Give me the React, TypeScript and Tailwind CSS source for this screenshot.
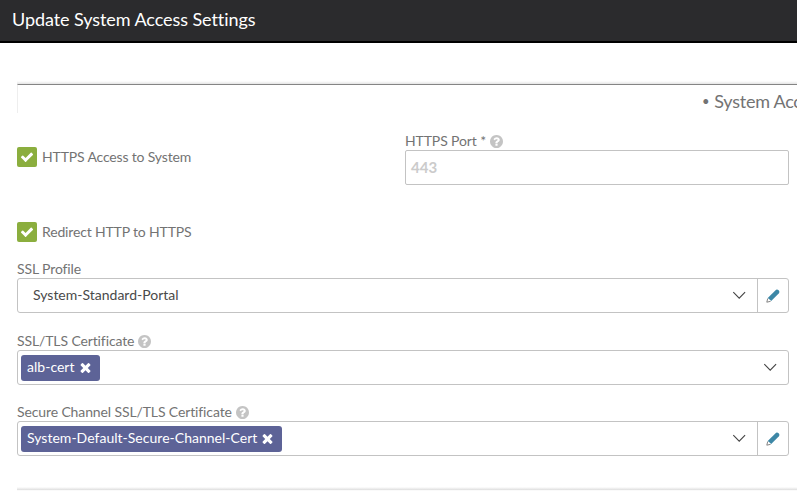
import type { ReactNode } from "react";

type IconProps = { className?: string };

function CheckIcon({ className }: IconProps) {
  return (
    <svg viewBox="0 0 1792 1792" className={className} fill="currentColor">
      <path d="M1671 566q0 40-28 68l-724 724-136 136q-28 28-68 28t-68-28l-136-136-362-362q-28-28-28-68t28-68l136-136q28-28 68-28t68 28l294 295 656-657q28-28 68-28t68 28l136 136q28 28 28 68z" />
    </svg>
  );
}

function TimesIcon({ className }: IconProps) {
  return (
    <svg viewBox="0 0 1792 1792" className={className} fill="currentColor">
      <path d="M1490 1322q0 40-28 68l-136 136q-28 28-68 28t-68-28l-294-294-294 294q-28 28-68 28t-68-28l-136-136q-28-28-28-68t28-68l294-294-294-294q-28-28-28-68t28-68l136-136q28-28 68-28t68 28l294 294 294-294q28-28 68-28t68 28l136 136q28 28 28 68t-28 68l-294 294 294 294q28 28 28 68z" />
    </svg>
  );
}

function HelpIcon() {
  return (
    <svg viewBox="128 128 1536 1536" className="size-[13px] text-[#c4c4c4]" fill="currentColor">
      <path d="M1024 1376v-192q0-14-9-23t-23-9h-192q-14 0-23 9t-9 23v192q0 14 9 23t23 9h192q14 0 23-9t9-23zm256-672q0-88-55.5-163t-138.5-116-170-41q-243 0-371 213-15 24 8 42l132 100q7 6 19 6 16 0 25-12 53-68 86-92 34-24 86-24 48 0 85.5 26t37.5 59q0 38-20 61t-68 45q-63 28-115.5 86.500t-52.5 125.500v36q0 14 9 23t23 9h192q14 0 23-9t9-23q0-19 21.500-49.500t54.500-49.500q32-18 49-28.500t46-35 44.500-48 28-60.500 12.500-81zm384 192q0 209-103 385.500t-279.500 279.500-385.500 103-385.500-103-279.500-279.500-103-385.500 103-385.500 279.500-279.500 385.500-103 385.500 103 279.500 279.500 103 385.500z" />
    </svg>
  );
}

function ChevronIcon() {
  return (
    <svg viewBox="0 0 14 8" className="mb-0.5 h-2 w-3.5 text-[#444]" fill="none" stroke="currentColor" strokeWidth="1.1">
      <path d="M1.300 1.200l5.900 5.900 5.900-5.900" />
    </svg>
  );
}

function PencilIcon() {
  return (
    <svg viewBox="0 0 14 14" className="size-3.5">
      <path d="M1.500 9.300L9.300 1.400Q10.900-.100 12.600 1.300Q14.100 3 12.700 4.500L5.200 12Z" fill="#3d87a6" />
      <path d="M2 9.200L.900 13.100L5 12Z" fill="#fff" />
      <path d="M1.700 9.600L.800 13.200L4.600 12.300" fill="none" stroke="#777" strokeWidth=".9" />
    </svg>
  );
}

function Checkbox({ children }: { children: ReactNode }) {
  return (
    <label className="flex h-5 items-center gap-[5px]">
      <span className="flex size-5 items-center justify-center rounded-[2px] bg-[#8bae3e] text-white">
        <CheckIcon className="size-[14px]" />
      </span>
      <span className="tracking-[-0.16px] whitespace-nowrap">{children}</span>
    </label>
  );
}

function Label({ children, help }: { children: ReactNode; help?: boolean }) {
  return (
    <div className="flex h-[18px] items-center gap-1 tracking-[-0.12px] whitespace-nowrap">
      {children}
      {help && <HelpIcon />}
    </div>
  );
}

function SelectBox({ children, editable }: { children: ReactNode; editable?: boolean }) {
  return (
    <div className="flex h-[35px] w-[772px] rounded-[3px] border border-[#c3c3c3] bg-white">
      <div className="flex flex-1 items-center justify-between pr-[11px]">
        {children}
        <ChevronIcon />
      </div>
      {editable && (
        <div className="flex w-[31px] items-center justify-center border-l border-[#c3c3c3]">
          <PencilIcon />
        </div>
      )}
    </div>
  );
}

function Tag({ children }: { children: ReactNode }) {
  return (
    <span className="ml-[3px] flex h-[26px] items-center gap-[3px] rounded-[3px] bg-[#5d6397] pr-[7px] pl-1.5 tracking-[0.02px] text-white">
      <span className="pb-0.5">{children}</span>
      <TimesIcon className="size-[15px]" />
    </span>
  );
}

export default function App() {
  return (
    <div className="h-[491px] w-[797px] overflow-hidden bg-white font-['Lato','Open_Sans',sans-serif] text-[14px] leading-[18px] text-[#737373]">
      <header className="h-[43px] border-b-2 border-black bg-[#2b2b2d] pt-[7px] pl-3 text-[18px] leading-6 text-white">
        <span className="tracking-[-0.07px]">Update System Access Settings</span>
      </header>
      <main className="pl-[17px]">
        <div className="mt-[38px] h-[3px] bg-linear-to-b from-white to-[#e5e5e5]" />
        <div className="flex h-[29px] w-[1440px] gap-[5px] border-t border-l border-t-[#858585] border-l-[#eee] pt-1 pl-[684px] text-[18px] leading-6 tracking-[-0.25px] whitespace-nowrap">
          <span className="text-[13px]">•</span>
          <span>System Access</span>
        </div>
        <div className="mt-[19px] flex h-[53px] w-[772px]">
          <div className="w-[388px] pt-[15px]">
            <Checkbox>HTTPS Access to System</Checkbox>
          </div>
          <div className="flex-1">
            <Label help>HTTPS Port *</Label>
            <div className="flex h-[35px] items-center rounded-[2px] border border-[#c3c3c3] pb-0.5 pl-[5px] text-[15px] font-bold text-[#cbcbcb]">
              443
            </div>
          </div>
        </div>
        <div className="mt-[37px]">
          <Checkbox>Redirect HTTP to HTTPS</Checkbox>
        </div>
        <div className="mt-[18px]">
          <Label>SSL Profile</Label>
          <SelectBox editable>
            <span className="pb-0.5 pl-[15px] text-[#4a4a4a]">System-Standard-Portal</span>
          </SelectBox>
        </div>
        <div className="mt-[19px]">
          <Label help>SSL/TLS Certificate</Label>
          <SelectBox>
            <Tag>alb-cert</Tag>
          </SelectBox>
        </div>
        <div className="mt-[18px]">
          <Label help>Secure Channel SSL/TLS Certificate</Label>
          <SelectBox editable>
            <Tag>System-Default-Secure-Channel-Cert</Tag>
          </SelectBox>
        </div>
        <div className="mt-[31px] h-[3px] bg-linear-to-b from-white to-[#dedede]" />
        <div className="h-1 bg-[#fafafa]" />
      </main>
    </div>
  );
}
